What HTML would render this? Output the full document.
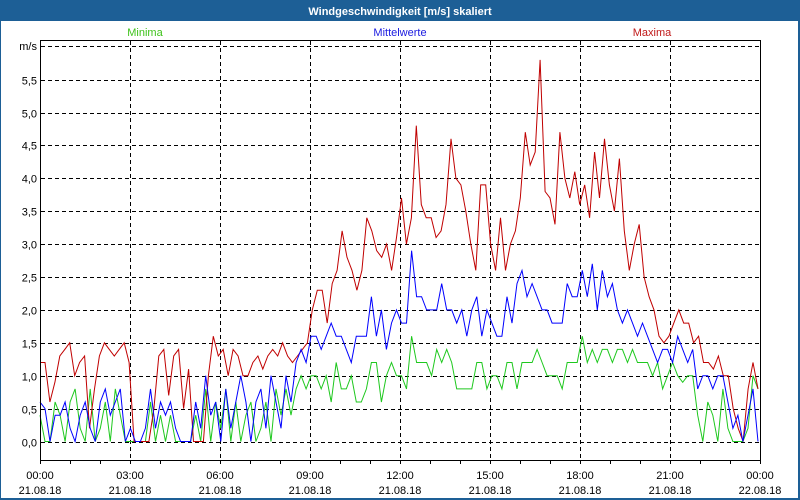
<!DOCTYPE html>
<html><head><meta charset="utf-8"><style>
html,body{margin:0;padding:0;background:#fff;}
body{width:800px;height:500px;position:relative;overflow:hidden;font-family:"Liberation Sans","DejaVu Sans",sans-serif;}
</style></head><body>
<svg id="s" width="800" height="500" xmlns="http://www.w3.org/2000/svg" style="position:absolute;left:0;top:0">
<rect x="0" y="0" width="800" height="500" fill="#1d5f96"/>
<rect x="1" y="21" width="797" height="477" fill="#fff"/>
<text x="400" y="15" fill="#fff" font-size="11" font-weight="bold" text-anchor="middle">Windgeschwindigkeit [m/s] skaliert</text>
<text x="145" y="36" fill="#3ec21a" font-size="11" text-anchor="middle">Minima</text>
<text x="400" y="36" fill="#1a1ae0" font-size="11" text-anchor="middle">Mittelwerte</text>
<text x="652" y="36" fill="#c01818" font-size="11" text-anchor="middle">Maxima</text>
<g id="grid" stroke="#000" stroke-width="1" stroke-dasharray="4,3"></g>
<g id="data" fill="none" stroke-width="1"></g>
<rect x="40.5" y="40.5" width="720" height="420" fill="none" stroke="#000"/>
<g id="ticks" stroke="#000"></g>
<g font-size="11" fill="#000" text-anchor="end" id="ylab">
<text x="37" y="50">m/s</text>
</g>
<g font-size="11" fill="#000" text-anchor="middle">
<text x="40" y="479">00:00</text><text x="40" y="494">21.08.18</text>
<text x="130" y="479">03:00</text><text x="130" y="494">21.08.18</text>
<text x="220" y="479">06:00</text><text x="220" y="494">21.08.18</text>
<text x="310" y="479">09:00</text><text x="310" y="494">21.08.18</text>
<text x="400" y="479">12:00</text><text x="400" y="494">21.08.18</text>
<text x="490" y="479">15:00</text><text x="490" y="494">21.08.18</text>
<text x="580" y="479">18:00</text><text x="580" y="494">21.08.18</text>
<text x="670" y="479">21:00</text><text x="670" y="494">21.08.18</text>
<text x="760" y="479">00:00</text><text x="760" y="494">22.08.18</text>
</g>
</svg>
<script>
var NS="http://www.w3.org/2000/svg";
function el(p,t,a){var e=document.createElementNS(NS,t);for(var k in a)e.setAttribute(k,a[k]);p.appendChild(e);return e;}
var g=document.getElementById("grid"),yl=document.getElementById("ylab"),tk=document.getElementById("ticks");
function Y(v){return 441.5-v*65.8;}
el(g,"line",{x1:41,x2:760,y1:46.5,y2:46.5});
for(var i=0;i<=11;i++){var v=i*0.5,y=Math.round(Y(v))+0.5;el(g,"line",{x1:41,x2:760,y1:y,y2:y});
var t=el(yl,"text",{x:37,y:y+4});t.textContent=v.toFixed(1).replace(".",",");}
for(var i=1;i<8;i++){var x=40+i*90+0.5;el(g,"line",{x1:x,x2:x,y1:41,y2:460});}
for(var i=0;i<=24;i++){var x=40+i*30+0.5;el(tk,"line",{x1:x,x2:x,y1:460,y2:464});}
var red=[1.2,1.2,0.6,0.9,1.3,1.4,1.5,1.0,1.2,1.3,0.2,0.8,1.3,1.5,1.4,1.3,1.4,1.5,1.2,0,0,0,0,0.5,1.3,1.4,0.7,1.3,1.4,0.5,1.1,0,0,0,1.0,1.6,1.3,1.4,1.0,1.4,1.3,1.0,1.0,1.2,1.3,1.1,1.3,1.4,1.3,1.5,1.3,1.2,1.3,1.4,1.5,2.0,2.3,2.3,1.8,2.4,2.6,3.2,2.8,2.6,2.3,2.6,3.4,3.2,2.9,2.8,3.0,2.6,3.1,3.7,3.0,3.4,4.8,3.6,3.4,3.4,3.1,3.2,3.6,4.6,4.0,3.9,3.5,3.0,2.6,3.9,3.9,3.0,2.6,3.4,2.6,3.0,3.2,3.7,4.7,4.2,4.4,5.8,3.8,3.7,3.3,4.7,4.0,3.7,4.1,3.6,3.9,3.4,4.4,3.7,4.6,3.9,3.5,4.3,3.2,2.6,3.0,3.3,2.5,2.2,2.0,1.6,1.5,1.6,1.8,2.0,1.8,1.8,1.5,1.6,1.2,1.2,1.1,1.3,1.0,1.0,0.5,0.2,0,0.8,1.2,0.8];
var blue=[0.6,0.5,0,0.4,0.4,0.6,0.2,0,0.4,0.6,0.2,0,0.6,0.8,0.4,0.6,0.8,0,0.2,0,0,0.2,0.8,0.2,0.6,0.4,0.6,0.2,0,0,0,0.6,0.2,1.0,0.4,0.6,0,0.8,0.2,0.6,1.0,0.6,0,0.6,0.8,0.2,1.0,0.6,0.2,1.0,0.6,1.2,1.4,1.2,1.6,1.6,1.4,1.6,1.8,1.6,1.6,1.4,1.2,1.6,1.6,1.6,2.2,1.6,2.0,1.4,1.8,2.0,1.8,1.8,2.9,2.2,2.2,2.0,2.0,2.0,2.4,2.0,2.0,1.8,2.0,1.6,2.0,2.2,1.6,2.0,1.8,1.6,1.6,2.2,1.8,2.4,2.6,2.2,2.4,2.2,2.0,2.0,1.8,1.8,1.8,2.4,2.2,2.2,2.6,2.2,2.7,2.0,2.6,2.2,2.4,2.0,1.8,2.0,1.8,1.6,1.8,1.6,1.4,1.2,1.4,1.4,1.2,1.6,1.4,1.2,1.4,0.8,1.0,1.0,0.8,1.0,1.0,0.6,0.2,0.4,0,0.4,0.8,0];
var green=[0.4,0,0,0.6,0.4,0,0.6,0.8,0.2,0,0.8,0,0.2,0.6,0,0.8,0.4,0,0,0,0,0,0.6,0,0.4,0,0.4,0,0,0,0,0.4,0,0.8,0,0.6,0.2,0.8,0,0.6,0,0.4,0.6,0,0.2,0.6,0,0.8,0.4,0.8,0.4,0.8,1.0,0.8,1.0,1.0,0.8,1.0,0.6,1.2,0.8,0.8,1.0,0.6,0.6,0.8,1.2,1.2,0.6,1.0,1.2,1.0,1.0,0.8,1.6,1.2,1.2,1.2,1.0,1.4,1.2,1.4,1.2,0.8,0.8,0.8,0.8,1.2,1.2,0.8,1.0,1.0,0.8,1.2,1.2,0.8,1.2,1.2,1.2,1.4,1.2,1.0,1.0,1.0,0.8,1.2,1.2,1.2,1.6,1.2,1.4,1.2,1.4,1.4,1.2,1.4,1.4,1.2,1.4,1.2,1.2,1.2,1.0,1.2,0.8,1.0,1.2,1.0,0.9,1.0,1.0,0.4,0,0.6,0.4,0,0.8,0.2,0,0,0,0.2,1.0,0.8];
var d=document.getElementById("data");
function line(a,c){var p=[],n=a.length,s=718/(n-1);for(var i=0;i<n;i++)p.push((40+i*s).toFixed(1)+","+Y(a[i]).toFixed(1));el(d,"polyline",{points:p.join(" "),stroke:c});}
line(green,"#1ec81e");line(red,"#c00000");line(blue,"#0000ff");
</script>
</body></html>
